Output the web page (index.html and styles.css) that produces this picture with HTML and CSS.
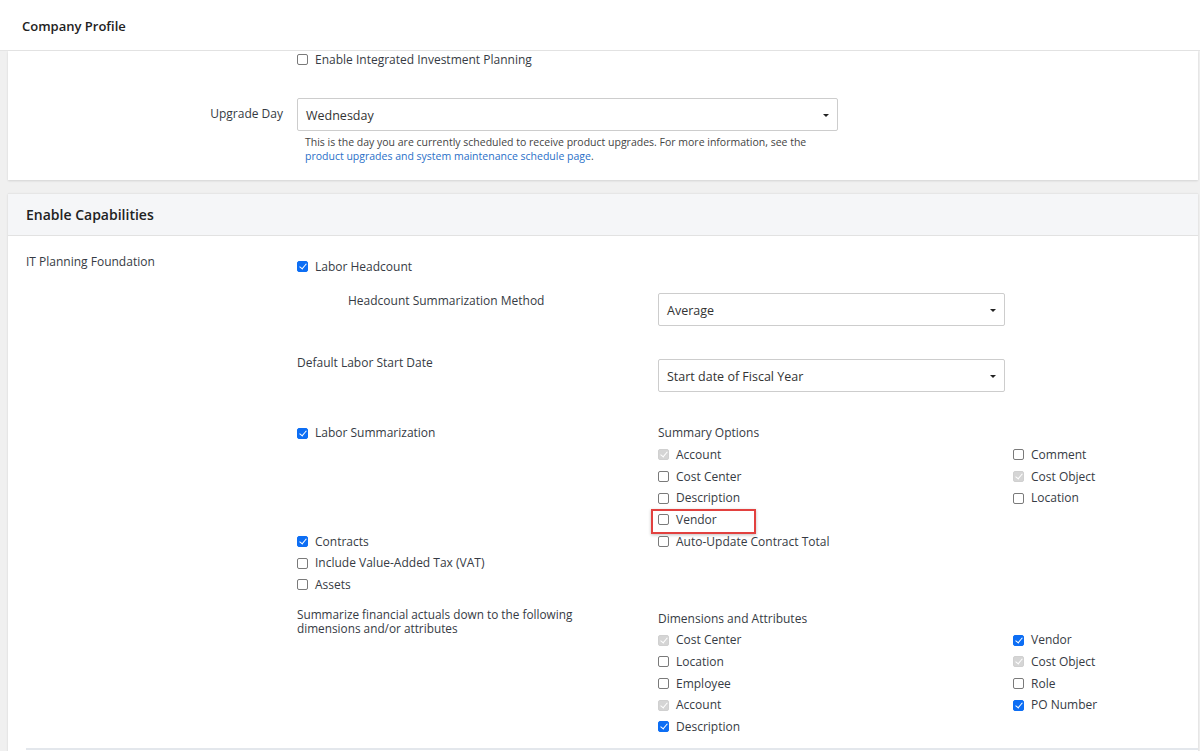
FILE: index.html
```html
<!DOCTYPE html>
<html>
<head>
<meta charset="utf-8">
<link rel="stylesheet" href="styles.css">
</head>
<body>
<header class="topbar"><h1 class="page-title">Company Profile</h1></header>
<main class="content">
  <section class="panel panel-general">
    <div class="form-row single">
      <div class="field-label"></div>
      <label class="check"><span class="box"></span>Enable Integrated Investment Planning</label>
    </div>
    <div class="form-row upgrade-row">
      <div class="field-label right">Upgrade Day</div>
      <div class="field">
        <div class="select wide"><span>Wednesday</span><i class="caret"></i></div>
        <p class="help">This is the day you are currently scheduled to receive product upgrades. For more information, see the<br><a class="link" href="#">product upgrades and system maintenance schedule page</a>.</p>
      </div>
    </div>
  </section>

  <section class="panel panel-caps">
    <h2 class="panel-head">Enable Capabilities</h2>
    <div class="caps-body">
      <div class="caps-label">IT Planning Foundation</div>
      <div class="caps-grid">
        <label class="check span2 first-check"><span class="box on"></span>Labor Headcount</label>

        <div class="sub-label indent">Headcount Summarization Method</div>
        <div class="select mid sel-first"><span>Average</span><i class="caret"></i></div>

        <div class="sub-label raised">Default Labor Start Date</div>
        <div class="select mid sel-second"><span>Start date of Fiscal Year</span><i class="caret"></i></div>

        <div class="list summ-left">
          <label class="check"><span class="box on"></span>Labor Summarization</label>
        </div>
        <div class="opts summ-right">
          <div class="opts-title">Summary Options</div>
          <div class="opts-cols">
            <div class="list col-a">
              <label class="check"><span class="box dis"></span>Account</label>
              <label class="check"><span class="box"></span>Cost Center</label>
              <label class="check"><span class="box"></span>Description</label>
              <label class="check marked"><span class="box"></span>Vendor</label>
            </div>
            <div class="list">
              <label class="check"><span class="box"></span>Comment</label>
              <label class="check"><span class="box dis"></span>Cost Object</label>
              <label class="check"><span class="box"></span>Location</label>
            </div>
          </div>
        </div>

        <div class="list">
          <label class="check"><span class="box on"></span>Contracts</label>
          <label class="check"><span class="box"></span>Include Value-Added Tax (VAT)</label>
          <label class="check"><span class="box"></span>Assets</label>
        </div>
        <div class="list">
          <label class="check"><span class="box"></span>Auto-Update Contract Total</label>
        </div>

        <div class="note">Summarize financial actuals down to the following<br>dimensions and/or attributes</div>
        <div class="opts dims">
          <div class="opts-title">Dimensions and Attributes</div>
          <div class="opts-cols">
            <div class="list col-a">
              <label class="check"><span class="box dis"></span>Cost Center</label>
              <label class="check"><span class="box"></span>Location</label>
              <label class="check"><span class="box"></span>Employee</label>
              <label class="check"><span class="box dis"></span>Account</label>
              <label class="check"><span class="box on"></span>Description</label>
            </div>
            <div class="list">
              <label class="check"><span class="box on"></span>Vendor</label>
              <label class="check"><span class="box dis"></span>Cost Object</label>
              <label class="check"><span class="box"></span>Role</label>
              <label class="check"><span class="box on"></span>PO Number</label>
            </div>
          </div>
        </div>
      </div>
    </div>
    <div class="caps-divider"></div>
  </section>
</main>
</body>
</html>
```

FILE: styles.css
```css
* { box-sizing: border-box; }
html, body { margin: 0; padding: 0; }
body {
  background: #f0f0f0;
  font-family: "Open Sans", "Noto Sans", sans-serif;
  font-size: 12px;
  color: #363b44;
  height: 751px;
  overflow: hidden;
}
.topbar {
  height: 51px;
  background: #fff;
  border-bottom: 1px solid #e4e4e4;
  display: flex;
  align-items: center;
  padding-left: 22px;
}
.page-title {
  margin: 0;
  font-size: 13px;
  font-weight: 600;
  color: #222;
  position: relative;
  top: 1px;
}
.content {
  padding: 0 2px 0 8px;
}
.panel {
  background: #fff;
  box-shadow: 0 1px 2px rgba(0,0,0,0.12);
}
.panel-general {
  display: flow-root;
  padding: 0 0 17px;
  height: 129px;
}
.form-row {
  display: grid;
  grid-template-columns: 275px 541px;
  column-gap: 14px;
}
.form-row.single { height: 17px; align-items: center; margin-top: -2px; }
.upgrade-row { margin-top: 32px; }
.field-label.right {
  text-align: right;
  padding-top: 7px;
  line-height: 17px;
}
.check {
  display: flex;
  align-items: center;
  gap: 7px;
  line-height: 21.7px;
  height: 21.7px;
  white-space: nowrap;
}
.box {
  width: 11px;
  height: 11px;
  border: 1px solid #7a7a7a;
  border-radius: 2px;
  background: #fff;
  flex: none;
  display: inline-block;
  position: relative;
}
.box.on {
  background: #0d6ef4;
  border-color: #0d6ef4;
}
.box.dis {
  background: #d5d5d5;
  border-color: #d0d0d0;
}
.box.on::after, .box.dis::after {
  content: "";
  position: absolute;
  left: 3px;
  top: 0px;
  width: 3px;
  height: 6px;
  border: solid #fff;
  border-width: 0 1.6px 1.6px 0;
  transform: rotate(40deg);
}
.select {
  height: 33px;
  border: 1px solid #cdcdcd;
  border-radius: 2px;
  background: #fff;
  display: flex;
  align-items: center;
  justify-content: space-between;
  padding: 1px 8px 0 8px;
  font-size: 12.5px;
  color: #333;
}
.select.mid { width: 347px; }
.sel-first, .sel-second { padding-top: 2px; }
.caret {
  width: 0;
  height: 0;
  border-left: 3px solid transparent;
  border-right: 3px solid transparent;
  border-top: 3.5px solid #222;
}
.help {
  margin: 4px 0 0 8px;
  font-size: 10.5px;
  line-height: 14px;
  color: #444;
}
.link { color: #2a6fc8; text-decoration: none; }

.panel-caps {
  margin-top: 13px;
  height: 570px;
}
.panel-head {
  margin: 0;
  height: 43px;
  background: #f5f6f8;
  border-bottom: 1px solid #e2e2e2;
  display: flex;
  align-items: center;
  padding-left: 18px;
  font-size: 14px;
  font-weight: 600;
  color: #222;
  box-shadow: inset 0 1px 0 #e6e6e6;
}
.caps-body {
  display: flex;
  padding-top: 16px;
}
.caps-label {
  width: 289px;
  padding-left: 18px;
  line-height: 20px;
  flex: none;
}
.caps-grid {
  display: grid;
  grid-template-columns: 361px 1fr;
  align-items: start;
}
.span2 { grid-column: 1 / 3; }
.first-check { margin-top: 4px; }
.sub-label { line-height: 16px; }
.sub-label.indent { padding-left: 51px; margin-top: 15px; }
.sel-first { margin-top: 15px; }
.sel-second { margin-top: 33px; }
.sub-label.raised { margin-top: 29px; }
.summ-left, .summ-right { margin-top: 30.5px; }
.opts-title { line-height: 21.7px; height: 21.7px; }
.opts-cols {
  display: grid;
  grid-template-columns: 355px 1fr;
}
.marked { position: relative; }
.marked::after {
  content: "";
  position: absolute;
  left: -7px;
  top: 0;
  width: 101px;
  height: 21px;
  border: 2px solid #e2413f;
  box-shadow: 0 1px 3px rgba(0,0,0,0.25);
}
.note {
  margin-top: 11px;
  line-height: 14px;
  font-size: 11.8px;
}
.dims { margin-top: 12px; }
.caps-divider {
  margin: 10px 0 0 18px;
  height: 2px;
  background: #e3e7ec;
}
```
